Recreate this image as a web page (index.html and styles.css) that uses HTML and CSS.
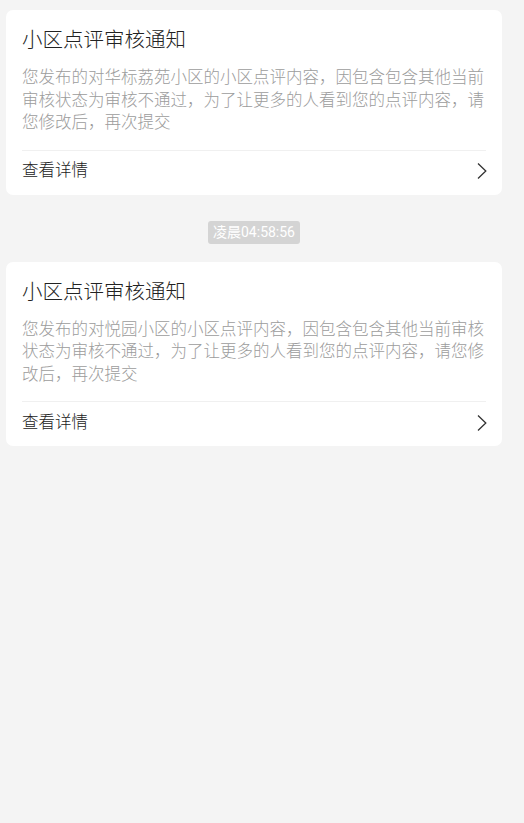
FILE: index.html
```html
<!DOCTYPE html>
<html lang="zh-CN">
<head>
<meta charset="utf-8">
<title>小区点评审核通知</title>
<link rel="stylesheet" href="styles.css">
</head>
<body>
<div class="list">
  <div class="card">
    <div class="card-body">
      <div class="title">小区点评审核通知</div>
      <div class="desc">您发布的对华标荔苑小区的小区点评内容，因包含包含其他当前审核状态为审核不通过，为了让更多的人看到您的点评内容，请您修改后，再次提交</div>
    </div>
    <div class="footer">
      <span>查看详情</span>
      <svg class="chev" width="10" height="18" viewBox="0 0 10 18"><path d="M1 1.5 L8.8 9 L1 16.5" fill="none" stroke="#333" stroke-width="1.3"/></svg>
    </div>
  </div>
  <div class="time-row"><span class="time">凌晨04:58:56</span></div>
  <div class="card">
    <div class="card-body">
      <div class="title">小区点评审核通知</div>
      <div class="desc">您发布的对悦园小区的小区点评内容，因包含包含其他当前审核状态为审核不通过，为了让更多的人看到您的点评内容，请您修改后，再次提交</div>
    </div>
    <div class="footer">
      <span>查看详情</span>
      <svg class="chev" width="10" height="18" viewBox="0 0 10 18"><path d="M1 1.5 L8.8 9 L1 16.5" fill="none" stroke="#333" stroke-width="1.3"/></svg>
    </div>
  </div>
</div>
</body>
</html>
```
FILE: styles.css
```css
html, body {
  margin: 0;
  padding: 0;
  background: #f4f4f4;
  font-family: Roboto, "Noto Sans CJK SC", sans-serif;
}
.list {
  width: 496px;
  margin-left: 6px;
  padding-top: 10px;
}
.card {
  background: #fff;
  border-radius: 7px;
  padding: 0 16px;
}
.card-body {
  padding: 16px 0 15px;
  border-bottom: 1px solid #f0f0f0;
  text-spacing-trim: space-all;
}
.title {
  font-size: 20.5px;
  font-weight: 300;
  line-height: 28px;
  color: #222;
}
.desc {
  margin-top: 13px;
  font-size: 16.5px;
  font-weight: 300;
  line-height: 22.5px;
  color: #9c9c9c;
}
.footer {
  box-sizing: border-box;
  height: 44px;
  padding-bottom: 3px;
  display: flex;
  align-items: center;
  justify-content: space-between;
  font-size: 16.5px;
  font-weight: 300;
  line-height: 22px;
  color: #222;
}
.chev {
  display: block;
  margin-right: -1px;
}
.time-row {
  display: flex;
  justify-content: center;
  padding: 26px 0 18px;
}
.time {
  display: block;
  background: #d4d4d4;
  color: #fff;
  font-size: 14px;
  line-height: 23px;
  padding: 0 5px;
  border-radius: 3px;
}
```
